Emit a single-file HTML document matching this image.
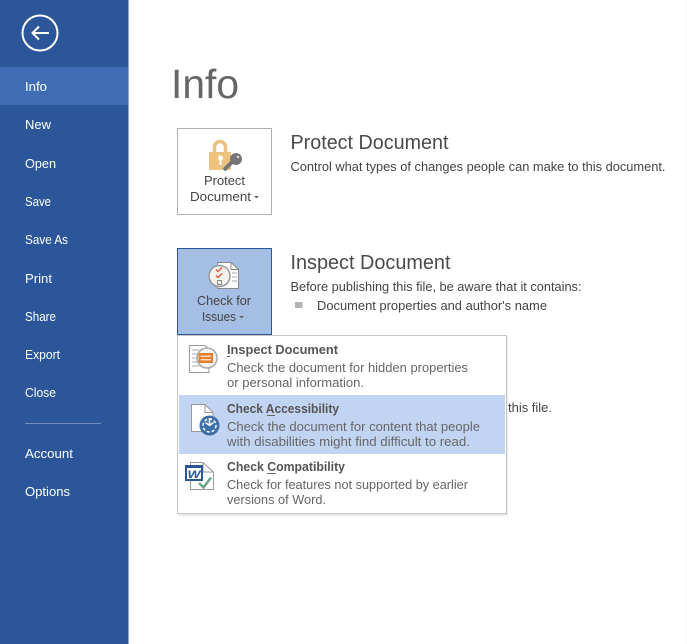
<!DOCTYPE html>
<html><head><meta charset="utf-8"><style>
html,body{margin:0;padding:0;background:#fff;width:687px;height:644px;overflow:hidden}
svg{display:block;position:absolute;left:0;top:0}
text{font-family:"Liberation Sans",sans-serif;font-size:13px;fill:#444}
.n{fill:#fff}
.d{fill:#666}
.b{font-weight:bold;fill:#555}
.h{font-size:20px;fill:#4a4a4a}
.c{fill:#444}
</style></head><body>
<svg width="687" height="644" viewBox="0 0 687 644" xmlns="http://www.w3.org/2000/svg">
<rect width="687" height="644" fill="#fff"/>
<rect x="685" width="2" height="644" fill="#fbfaf8"/>
<rect width="129" height="644" fill="#2b579a"/>
<rect x="128" width="1" height="644" fill="#8ba7cf"/>
<rect y="67" width="128" height="38" fill="#3e6db5"/>
<circle cx="40" cy="33" r="17.5" fill="none" stroke="#fff" stroke-width="2"/>
<path d="M32 33H49M39 26.5L32.5 33L39 39.5" fill="none" stroke="#fff" stroke-width="2"/>
<text class="n" x="25" y="91" textLength="22" lengthAdjust="spacingAndGlyphs">Info</text>
<text class="n" x="25" y="129" textLength="26" lengthAdjust="spacingAndGlyphs">New</text>
<text class="n" x="25" y="168" textLength="31" lengthAdjust="spacingAndGlyphs">Open</text>
<text class="n" x="25" y="206" textLength="26" lengthAdjust="spacingAndGlyphs">Save</text>
<text class="n" x="25" y="244" textLength="43" lengthAdjust="spacingAndGlyphs">Save As</text>
<text class="n" x="25" y="283" textLength="27" lengthAdjust="spacingAndGlyphs">Print</text>
<text class="n" x="25" y="321" textLength="31" lengthAdjust="spacingAndGlyphs">Share</text>
<text class="n" x="25" y="359" textLength="35" lengthAdjust="spacingAndGlyphs">Export</text>
<text class="n" x="25" y="397" textLength="31" lengthAdjust="spacingAndGlyphs">Close</text>
<rect x="25" y="423" width="76" height="1" fill="#6d8cbc"/>
<text class="n" x="25" y="458" textLength="48" lengthAdjust="spacingAndGlyphs">Account</text>
<text class="n" x="25" y="496" textLength="45" lengthAdjust="spacingAndGlyphs">Options</text>

<text x="171" y="98" style="font-size:41px;fill:#666" textLength="68" lengthAdjust="spacingAndGlyphs">Info</text>

<rect x="177.5" y="128.5" width="94" height="86" fill="#fff" stroke="#b0b0b0"/>
<path d="M214.500 152V147a5.500 5.500 0 0 1 11 0V152" fill="none" stroke="#edc17f" stroke-width="3.500"/>
<rect x="209" y="152" width="22" height="18" rx="1" fill="#eec27f"/>
<circle cx="220.500" cy="158" r="2.500" fill="#fff"/>
<rect x="219.500" y="158" width="2" height="7" fill="#fff"/>
<path d="M224 170L233 161" stroke="#777" stroke-width="4" fill="none"/>
<circle cx="236" cy="159" r="6" fill="#777"/>
<circle cx="238" cy="157" r="1.200" fill="#ddd"/>
<text class="c" x="204" y="185" textLength="41" lengthAdjust="spacingAndGlyphs">Protect</text>
<text class="c" x="190" y="201" textLength="61" lengthAdjust="spacingAndGlyphs">Document</text>
<path d="M254 196h5l-2.500 2.500z" fill="#666"/>

<text class="h" x="290.500" y="149" textLength="158" lengthAdjust="spacingAndGlyphs">Protect Document</text>
<text x="290.500" y="171" textLength="375" lengthAdjust="spacingAndGlyphs">Control what types of changes people can make to this document.</text>

<rect x="177.500" y="248.500" width="94" height="86" fill="#a4bee4" stroke="#2b579a"/>
<path d="M217.500 262.500H231L238.500 269.500V288.500H217.500Z" fill="#fff" stroke="#888"/>
<path d="M231 262.500V269.500H238.500" fill="none" stroke="#888"/>
<path d="M232 273h5M232 277h5M232 281h5" stroke="#aaa"/>
<circle cx="219.500" cy="276" r="10.500" fill="#f4f1ee" stroke="#999" stroke-width="1.500"/>
<path d="M216 269.500l2 2 4-4M216 275.500l2 2 4-4" fill="none" stroke="#d9633a" stroke-width="1.500"/>
<rect x="217.500" y="280.500" width="4" height="4" fill="none" stroke="#888"/>
<text class="c" x="197" y="305" textLength="54" lengthAdjust="spacingAndGlyphs">Check for</text>
<text class="c" x="202" y="321" textLength="34" lengthAdjust="spacingAndGlyphs">Issues</text>
<path d="M239 316h5l-2.500 2.500z" fill="#666"/>

<text class="h" x="290.500" y="269" textLength="160" lengthAdjust="spacingAndGlyphs">Inspect Document</text>
<text x="290.500" y="291" textLength="291" lengthAdjust="spacingAndGlyphs">Before publishing this file, be aware that it contains:</text>
<rect x="295" y="302" width="7.500" height="6" fill="#b5b5b5"/>
<text x="317" y="310" textLength="230" lengthAdjust="spacingAndGlyphs">Document properties and author's name</text>
<text x="508" y="412" textLength="44" lengthAdjust="spacingAndGlyphs">this file.</text>

<rect x="179" y="337" width="329" height="179" fill="#000" opacity=".08"/>
<rect x="177.500" y="335.500" width="329" height="178" fill="#fff" stroke="#c6c6c6"/>
<rect x="179" y="395" width="326" height="59" fill="#c1d4f2"/>

<path d="M189.500 345.500H205L209 349.500V372.500H189.500Z" fill="#fff" stroke="#999"/>
<path d="M192 350h7M192 354h6M192 358h5M192 362h5M192 366h7" stroke="#aaa"/>
<circle cx="207" cy="358" r="10" fill="#f6f4f2" stroke="#aaa" stroke-width="1.500"/>
<rect x="198.500" y="353" width="14.500" height="10" fill="#e1812f"/>
<rect x="200.500" y="355.500" width="10.500" height="1.500" fill="#f8dcc0"/>
<rect x="200.500" y="359" width="10.500" height="1.500" fill="#f8dcc0"/>
<text class="b" x="227" y="354" textLength="111" lengthAdjust="spacingAndGlyphs">Inspect Document</text>
<rect x="227" y="356" width="3" height="1" fill="#666"/>
<text class="d" x="227" y="372" textLength="241" lengthAdjust="spacingAndGlyphs">Check the document for hidden properties</text>
<text class="d" x="227" y="387" textLength="137" lengthAdjust="spacingAndGlyphs">or personal information.</text>

<path d="M191.500 404.500H205L213 412.500V431.500H191.500Z" fill="#fff" stroke="#999"/>
<path d="M205 404.500V412.500H213" fill="none" stroke="#999"/>
<circle cx="209.500" cy="425.500" r="10" fill="#3d6fa8"/>
<path d="M209.500 418v7.500M209.500 425.500l-4 -3M209.500 425.500l4 -3" stroke="#fff" stroke-width="1.500"/>
<circle cx="209.500" cy="425.500" r="6.500" fill="none" stroke="#fff" stroke-width="1.500" stroke-dasharray="3 2"/>
<text class="b" x="227" y="413" textLength="112" lengthAdjust="spacingAndGlyphs">Check Accessibility</text>
<rect x="267" y="415" width="8" height="1" fill="#666"/>
<text class="d" x="227" y="431" textLength="253" lengthAdjust="spacingAndGlyphs">Check the document for content that people</text>
<text class="d" x="227" y="446" textLength="243" lengthAdjust="spacingAndGlyphs">with disabilities might find difficult to read.</text>

<path d="M190.500 462.500H203L213.500 472V489.500H190.500Z" fill="#fff" stroke="#999"/>
<path d="M203 462.500V472H213.500" fill="none" stroke="#999"/>
<rect x="185" y="465" width="18" height="16" fill="#2b579a"/>
<rect x="187" y="468" width="14" height="11" fill="#fff"/>
<text x="187.500" y="478" style="font-size:11px;font-weight:bold;font-style:italic;fill:#2b579a" textLength="13" lengthAdjust="spacingAndGlyphs">W</text>
<path d="M199 483l4.500 4.500 7.500-10" fill="none" stroke="#6aa58c" stroke-width="2.500"/>
<text class="b" x="227" y="471" textLength="118" lengthAdjust="spacingAndGlyphs">Check Compatibility</text>
<rect x="267" y="473" width="9" height="1" fill="#666"/>
<text class="d" x="227" y="489" textLength="241" lengthAdjust="spacingAndGlyphs">Check for features not supported by earlier</text>
<text class="d" x="227" y="504" textLength="99" lengthAdjust="spacingAndGlyphs">versions of Word.</text>
</svg>
</body></html>
